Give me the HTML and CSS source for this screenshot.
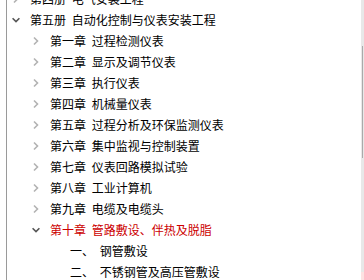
FILE: index.html
```html
<!DOCTYPE html>
<html lang="zh-CN">
<head>
<meta charset="utf-8">
<link rel="stylesheet" href="styles.css">
</head>
<body>
<div class="panel">
  <div class="tree">
    <div class="row lv0"><span class="icon"><svg viewBox="0 0 8 8" width="8" height="8"><polyline class="closed" points="2,0.5 5.5,4 2,7.5"/></svg></span><span class="label">第四册 电气安装工程</span></div>
    <div class="row lv0"><span class="icon"><svg viewBox="0 0 8 8" width="8" height="8"><polyline class="open" points="0.6,2.2 4,5.6 7.4,2.2"/></svg></span><span class="label">第五册 自动化控制与仪表安装工程</span></div>
    <div class="row lv1"><span class="icon"><svg viewBox="0 0 8 8" width="8" height="8"><polyline class="closed" points="2,0.5 5.5,4 2,7.5"/></svg></span><span class="label">第一章 过程检测仪表</span></div>
    <div class="row lv1"><span class="icon"><svg viewBox="0 0 8 8" width="8" height="8"><polyline class="closed" points="2,0.5 5.5,4 2,7.5"/></svg></span><span class="label">第二章 显示及调节仪表</span></div>
    <div class="row lv1"><span class="icon"><svg viewBox="0 0 8 8" width="8" height="8"><polyline class="closed" points="2,0.5 5.5,4 2,7.5"/></svg></span><span class="label">第三章 执行仪表</span></div>
    <div class="row lv1"><span class="icon"><svg viewBox="0 0 8 8" width="8" height="8"><polyline class="closed" points="2,0.5 5.5,4 2,7.5"/></svg></span><span class="label">第四章 机械量仪表</span></div>
    <div class="row lv1"><span class="icon"><svg viewBox="0 0 8 8" width="8" height="8"><polyline class="closed" points="2,0.5 5.5,4 2,7.5"/></svg></span><span class="label">第五章 过程分析及环保监测仪表</span></div>
    <div class="row lv1"><span class="icon"><svg viewBox="0 0 8 8" width="8" height="8"><polyline class="closed" points="2,0.5 5.5,4 2,7.5"/></svg></span><span class="label">第六章 集中监视与控制装置</span></div>
    <div class="row lv1"><span class="icon"><svg viewBox="0 0 8 8" width="8" height="8"><polyline class="closed" points="2,0.5 5.5,4 2,7.5"/></svg></span><span class="label">第七章 仪表回路模拟试验</span></div>
    <div class="row lv1"><span class="icon"><svg viewBox="0 0 8 8" width="8" height="8"><polyline class="closed" points="2,0.5 5.5,4 2,7.5"/></svg></span><span class="label">第八章 工业计算机</span></div>
    <div class="row lv1"><span class="icon"><svg viewBox="0 0 8 8" width="8" height="8"><polyline class="closed" points="2,0.5 5.5,4 2,7.5"/></svg></span><span class="label">第九章 电缆及电缆头</span></div>
    <div class="row lv1 active"><span class="icon"><svg viewBox="0 0 8 8" width="8" height="8"><polyline class="open" points="0.6,2.2 4,5.6 7.4,2.2"/></svg></span><span class="label">第十章 管路敷设、伴热及脱脂</span></div>
    <div class="row lv2"><span class="icon"></span><span class="label">一、 钢管敷设</span></div>
    <div class="row lv2"><span class="icon"></span><span class="label">二、 不锈钢管及高压管敷设</span></div>
  </div>
  <div class="scrollbar">
    <div class="thumb"></div>
    <div class="down"></div>
  </div>
</div>
</body>
</html>
```
FILE: styles.css
```css
html, body {
  margin: 0;
  padding: 0;
  background: #ffffff;
}
body {
  width: 364px;
  height: 280px;
  overflow: hidden;
}
.panel {
  margin-left: 6px;
  height: 280px;
  border-left: 1px solid #9a9a9a;
  display: flex;
  background: #ffffff;
}
.tree {
  flex: 1;
  overflow: hidden;
}
.tree-inner, .tree > .row:first-child {
  margin-top: -12px;
}
.row {
  display: flex;
  align-items: center;
  height: 21px;
  font-family: "Noto Sans CJK SC", "Noto Sans", sans-serif;
  font-size: 12px;
  line-height: 21px;
  color: #000000;
  white-space: nowrap;
  word-spacing: 3px;
}
.lv0 { padding-left: 1px; }
.lv1 { padding-left: 21px; }
.lv2 { padding-left: 41px; }
.icon {
  width: 16px;
  height: 21px;
  margin-right: 6px;
  display: flex;
  align-items: center;
  justify-content: center;
  flex: none;
}
.icon svg {
  display: block;
  overflow: visible;
}
.icon polyline {
  fill: none;
  stroke-width: 1.6;
  stroke-linecap: butt;
  stroke-linejoin: miter;
}
.icon .closed { stroke: #b2b2b2; }
.icon .open { stroke: #555555; }
.active .label { color: #cc0000; }
.scrollbar {
  width: 3px;
  flex: none;
  background: #e8e8e8;
  display: flex;
  flex-direction: column;
}
.thumb {
  margin-top: 46px;
  margin-left: 1px;
  width: 1px;
  height: 112px;
  background: #aaaaaa;
}
.down {
  margin-top: auto;
  height: 8px;
  background: #fde2e2;
}
```
